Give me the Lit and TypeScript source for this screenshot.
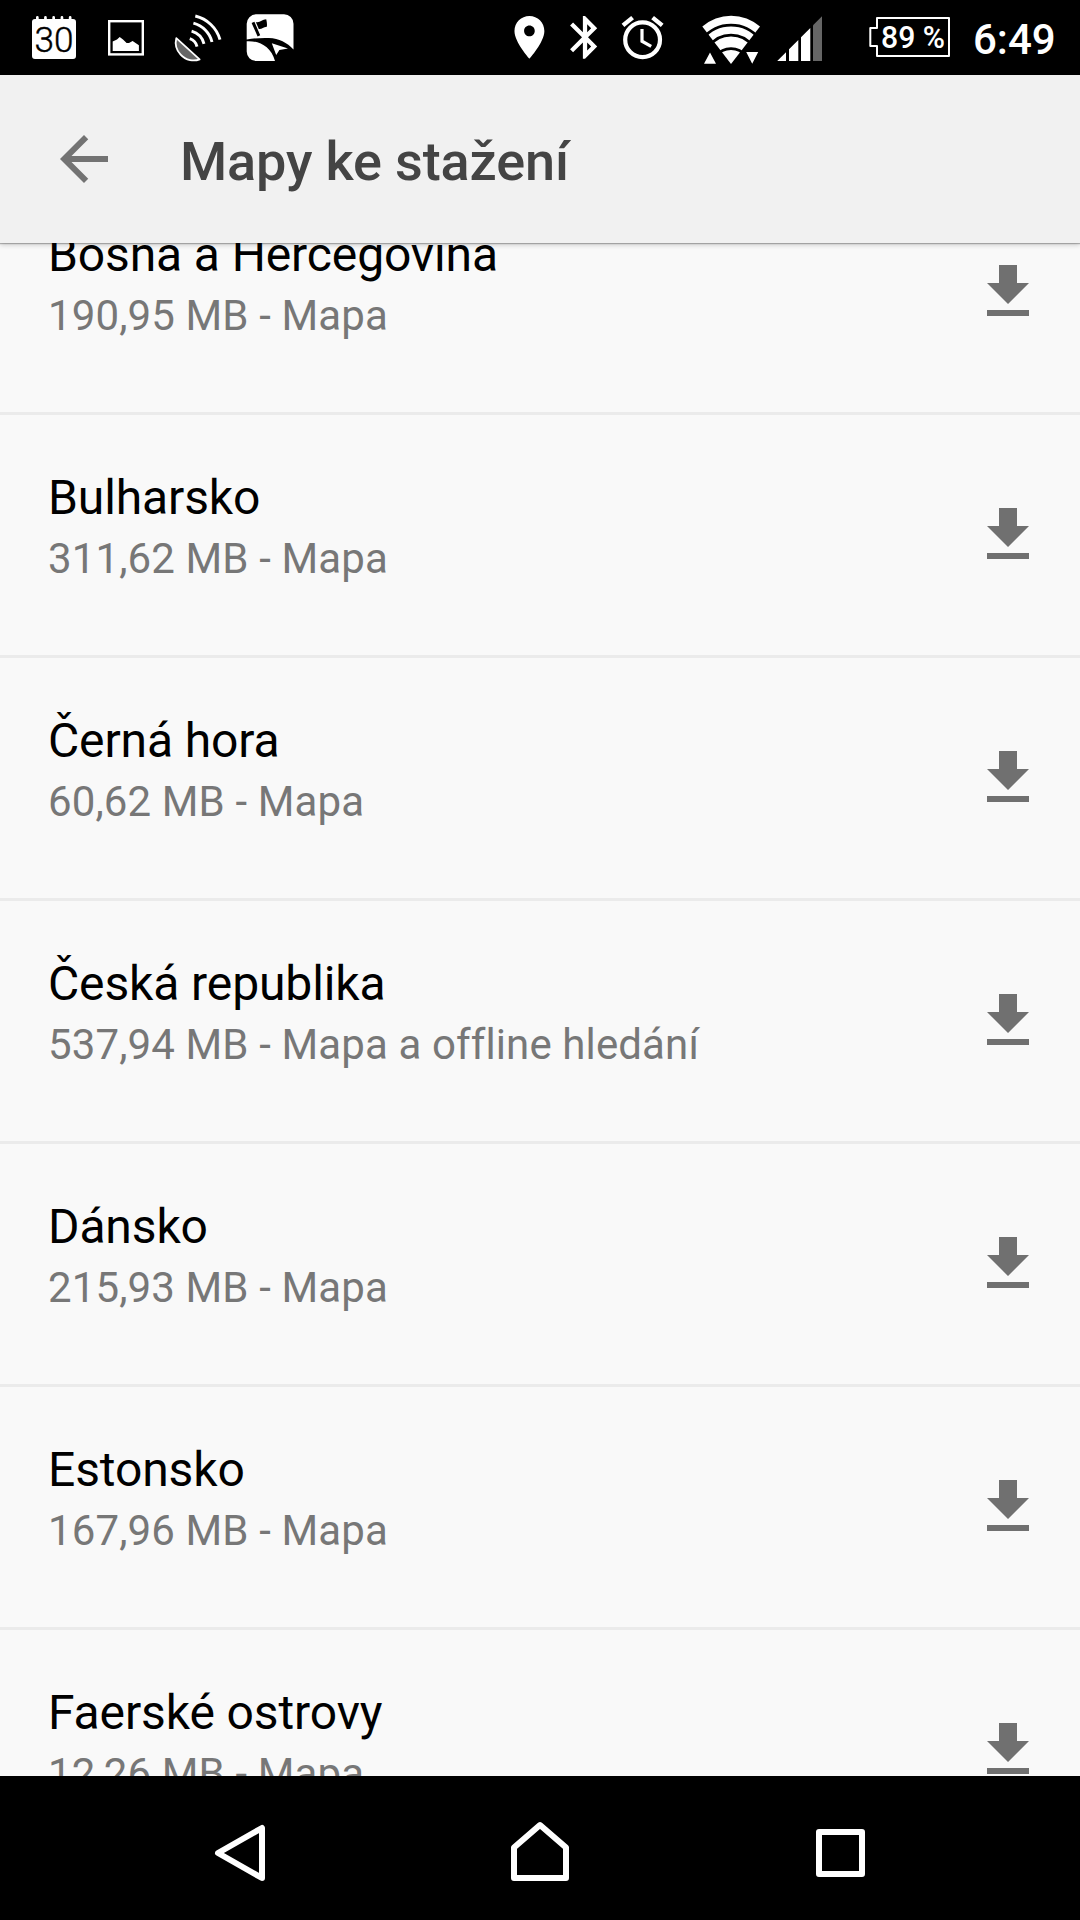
import { LitElement, html, css, svg } from "lit";
import { customElement, property } from "lit/decorators.js";

interface MapRegion {
  name: string;
  size: string;
  content: string;
}

const REGIONS: MapRegion[] = [
  { name: "Bosna a Hercegovina", size: "190,95 MB", content: "Mapa" },
  { name: "Bulharsko", size: "311,62 MB", content: "Mapa" },
  { name: "Černá hora", size: "60,62 MB", content: "Mapa" },
  { name: "Česká republika", size: "537,94 MB", content: "Mapa a offline hledání" },
  { name: "Dánsko", size: "215,93 MB", content: "Mapa" },
  { name: "Estonsko", size: "167,96 MB", content: "Mapa" },
  { name: "Faerské ostrovy", size: "12,26 MB", content: "Mapa" },
];

// Each status glyph occupies its own slice of the 1080x75 bar.
const calendar = svg`
  <path fill="#fff" d="M35 19H36V17.4a1.35 1.35 0 0 1 2.7 0V19H44.1V17.4a1.35 1.35 0 0 1 2.7 0V19H52.3V17.4a1.35 1.35 0 0 1 2.7 0V19H60.6V17.4a1.35 1.35 0 0 1 2.7 0V19H68.8V17.4a1.35 1.35 0 0 1 2.7 0V19H73a3 3 0 0 1 3 3V56a3 3 0 0 1-3 3H35a3 3 0 0 1-3-3V22a3 3 0 0 1 3-3z"/>
  <text x="34.6" y="51.8" font-size="35" font-weight="300" textLength="39" lengthAdjust="spacingAndGlyphs" fill="#000" stroke="#000" stroke-width="0.4">30</text>`;

const picture = svg`
  <rect x="109.2" y="21.2" width="33.6" height="33.2" fill="none" stroke="#fff" stroke-width="2.4"/>
  <path fill="#fff" d="M112.7 51V41.6L117 39.4 119.7 37 123 39.6 126.6 43 129 43 132.6 41 138.9 45.2V51z"/>`;

const satellite = svg`
  <path fill="#666" stroke="#fff" stroke-width="1.8" stroke-linejoin="round" d="M176.3 38.2L199.6 59.3C194 61.6 186 60.6 180.6 54.6 176 49.6 174.8 44 176.3 38.2z"/>
  <g fill="none" stroke="#fff" stroke-width="2.9">
    <path d="M195.3 16A34 34 0 0 1 220 39.6"/>
    <path d="M193.4 23.2A26 26 0 0 1 212 42"/>
    <path d="M191.6 31.2A18 18 0 0 1 204 43.8"/>
    <path d="M189.8 38.6A11 11 0 0 1 197 46.6"/>
  </g>`;

const mapsApp = svg`
  <path fill="#fff" d="M256 14.3H284a9.5 9.5 0 0 1 9.5 9.5V49.5C287 42.5 279 38.4 269 38 261 37.6 254 38.4 246.7 39.6V23.8a9.5 9.5 0 0 1 9.3-9.5z"/>
  <path fill="#fff" d="M246.7 41.2C258 40.5 271 46 275 61H256a9.5 9.5 0 0 1-9.3-9.5z"/>
  <path fill="#fff" d="M271.8 43.2L288 48.4 279.4 50 276.2 55z"/>
  <path fill="#000" d="M251.6 23L254.4 21.8 260.2 35.2 257.6 36.4zM255.8 22C260 23 262 19.4 266.2 19.2 267 22.6 267.2 25 266.8 26.8 263 27 262 29.4 258.8 29z"/>`;

const location = svg`
  <path fill="#fff" transform="translate(503.8 11.7) scale(2.135)" d="M12 2C8.13 2 5 5.13 5 9c0 5.25 7 13 7 13s7-7.75 7-13c0-3.87-3.13-7-7-7zm0 9.5c-1.38 0-2.5-1.12-2.5-2.5s1.12-2.5 2.5-2.5 2.5 1.12 2.5 2.5-1.12 2.5-2.5 2.5z"/>`;

const bluetooth = svg`
  <path fill="#fff" transform="translate(559.4 11.7) scale(2.135)" d="M17.71 7.71L12 2h-1v7.59L6.41 5 5 6.41 10.59 12 5 17.59 6.41 19 11 14.41V22h1l5.71-5.71-4.3-4.29 4.3-4.29zM13 5.83l1.88 1.88L13 9.59V5.83zm1.88 10.46L13 18.17v-3.76l1.88 1.88z"/>`;

const alarm = svg`
  <g fill="none" stroke="#fff">
    <circle cx="642.6" cy="39.7" r="17.4" stroke-width="4.2"/>
    <path stroke-width="4.4" d="M623 25.4L632.6 17.6M652.6 17.6L662.2 25.4"/>
    <path stroke-width="3.2" d="M642 29V41.2L651.2 46.4"/>
  </g>`;

const wifi = svg`
  <path fill="#fff" d="M702.3 26.6A43.5 43.5 0 0 1 760 26.6L731 64z"/>
  <g fill="none" stroke="#000" stroke-width="2.6">
    <path d="M703 38.5A36 36 0 0 1 759 38.5"/>
    <path d="M709 46.5A27 27 0 0 1 753 46.5"/>
    <path d="M716 56A19 19 0 0 1 746 56"/>
  </g>
  <path fill="#fff" stroke="#000" stroke-width="3" paint-order="stroke" d="M710 52.4L716 63.8H704zM746.2 52H758.2L752.2 63.8z"/>`;

const cellular = svg`
  <path fill="#fff" d="M777.2 61L786 52.2V61zM789 61V49.2L798.3 39.9V61zM801 61V37.2L810.3 27.9V61z"/>
  <path fill="#666" d="M813 61V25.2L822 16.2V61z"/>`;

const battery = svg`
  <path fill="none" stroke="#fff" stroke-width="2" stroke-linejoin="round" d="M877 18H949V56H877V46H870.3V28H877z"/>
  <text x="881" y="48.3" font-size="31.5" font-weight="500" textLength="64" lengthAdjust="spacingAndGlyphs" fill="#fff">89 %</text>`;

const STATUS_SLICES = [
  { from: 0, to: 92, art: calendar },
  { from: 92, to: 160, art: picture },
  { from: 160, to: 234, art: satellite },
  { from: 234, to: 480, art: mapsApp },
  { from: 480, to: 556, art: location },
  { from: 556, to: 610, art: bluetooth },
  { from: 610, to: 680, art: alarm },
  { from: 680, to: 768, art: wifi },
  { from: 768, to: 845, art: cellular },
  { from: 845, to: 960, art: battery },
];

@customElement("status-bar")
export class StatusBar extends LitElement {
  static styles = css`
    :host {
      display: flex;
      height: 75px;
      flex: none;
      background: #000;
      color: #fff;
      font-family: Roboto, sans-serif;
    }
    .glyph {
      display: block;
      flex: none;
      height: 75px;
    }
    .clock {
      flex: 1;
      padding: 15px 0 0 13px;
      font-size: 42px;
      line-height: 50px;
      font-weight: 500;
      white-space: nowrap;
    }
  `;

  render() {
    return html`
      ${STATUS_SLICES.map(
        (s) => html`<svg class="glyph" width=${s.to - s.from} height="75" viewBox="${s.from} 0 ${s.to - s.from} 75" aria-hidden="true">${s.art}</svg>`,
      )}
      <div class="clock">6:49</div>
    `;
  }
}

@customElement("map-row")
export class MapRow extends LitElement {
  @property({ attribute: false }) region!: MapRegion;

  static styles = css`
    :host {
      display: flex;
      flex: none;
      box-sizing: border-box;
      height: 243px;
      padding: 0 36px 0 48px;
      align-items: center;
      justify-content: space-between;
      border-bottom: 3px solid #ebebeb;
    }
    .texts {
      display: flex;
      flex-direction: column;
      gap: 8px;
      padding-bottom: 17px;
      white-space: nowrap;
    }
    .name {
      font-size: 48px;
      line-height: 56px;
      letter-spacing: -0.12px;
      color: #000;
    }
    .detail {
      font-size: 42px;
      line-height: 49px;
      letter-spacing: 0.12px;
      color: #777;
    }
    .download {
      display: block;
      width: 72px;
      height: 72px;
      fill: #707070;
    }
  `;

  render() {
    return html`
      <div class="texts">
        <div class="name">${this.region.name}</div>
        <div class="detail">${this.region.size} - ${this.region.content}</div>
      </div>
      <svg class="download" viewBox="0 0 24 24"><path d="M19 9h-4V3H9v6H5l7 7 7-7zM5 18v2h14v-2H5z"/></svg>
    `;
  }
}

@customElement("app-root")
export class AppRoot extends LitElement {
  static styles = css`
    :host {
      display: flex;
      flex-direction: column;
      width: 1080px;
      height: 1920px;
      overflow: hidden;
      background: #f9f9f9;
      font-family: Roboto, sans-serif;
    }
    .toolbar {
      display: flex;
      flex: none;
      align-items: center;
      gap: 60px;
      height: 168px;
      padding-left: 48px;
      background: #f1f1f1;
      box-shadow: 0 1px 1px rgba(0, 0, 0, 0.25), 0 2px 5px rgba(0, 0, 0, 0.18);
      z-index: 1;
    }
    .back {
      display: block;
      width: 72px;
      height: 72px;
      fill: #737373;
    }
    .title {
      font-size: 54px;
      line-height: 64px;
      font-weight: 500;
      letter-spacing: -0.14px;
      color: #444;
      white-space: nowrap;
      padding-top: 6px;
    }
    .list {
      display: flex;
      flex-direction: column;
      flex: 1;
      min-height: 0;
      overflow: hidden;
    }
    .scrolled {
      margin-top: -71px;
    }
    .nav {
      display: grid;
      grid-template-columns: repeat(3, 300px);
      justify-content: center;
      justify-items: center;
      flex: none;
      height: 144px;
      background: #000;
    }
    .key {
      display: block;
      fill: none;
      stroke: #fff;
      stroke-width: 6;
      stroke-linejoin: round;
    }
  `;

  render() {
    return html`
      <status-bar></status-bar>
      <div class="toolbar">
        <svg class="back" viewBox="0 0 24 24"><path d="M20 11H7.83l5.59-5.59L12 4l-8 8 8 8 1.41-1.41L7.83 13H20v-2z"/></svg>
        <div class="title">Mapy ke stažení</div>
      </div>
      <div class="list">
        <div class="scrolled">${REGIONS.map((r) => html`<map-row .region=${r}></map-row>`)}</div>
      </div>
      <div class="nav">
        <svg class="key" width="80" height="144" viewBox="200 0 80 144"><path d="M262 52V102L218 77z"/></svg>
        <svg class="key" width="80" height="144" viewBox="500 0 80 144"><path d="M514 102V71.5L540 49 566 71.5V102z"/></svg>
        <svg class="key" width="80" height="144" viewBox="800 0 80 144"><path d="M819 56H862V98H819z"/></svg>
      </div>
    `;
  }
}
